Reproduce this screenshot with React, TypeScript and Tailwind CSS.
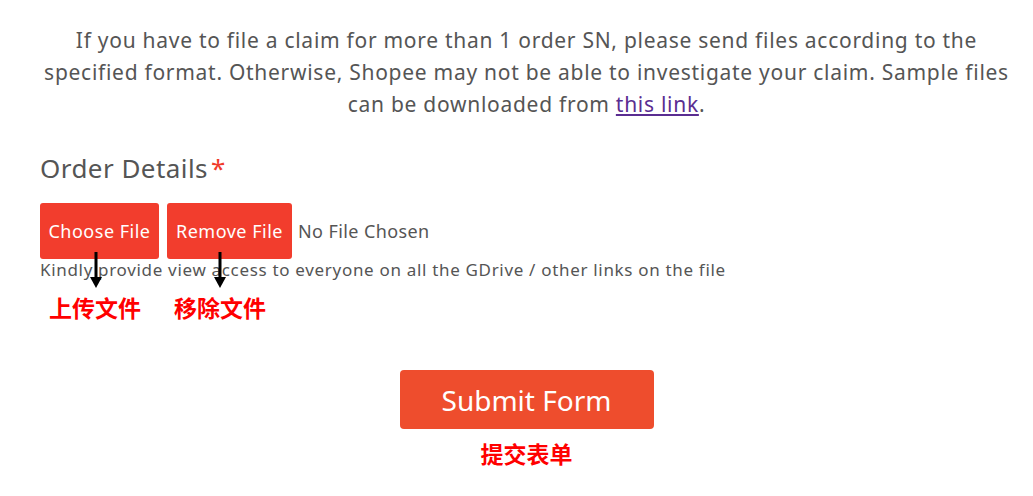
import React from "react";

function Arrow({ x }: { x: number }) {
  return (
    <svg
      className="absolute"
      style={{ left: x - 7, top: 252 }}
      width="14"
      height="37"
      viewBox="0 0 14 37"
    >
      <rect x="5.5" y="0" width="3" height="27" fill="#000" />
      <polygon points="1,25 13,25 7,36" fill="#000" />
    </svg>
  );
}

export default function App() {
  const font = { fontFamily: '"Noto Sans", "Open Sans", sans-serif' };
  const cjk = { fontFamily: '"Noto Sans CJK SC", sans-serif' };
  return (
    <div className="relative w-[1033px] h-[496px] bg-white overflow-hidden" style={font}>
      <p className="pt-[24px] pl-[20px] text-center text-[21px] leading-[32px] tracking-[0.72px] text-[#555555]">
        If you have to file a claim for more than 1 order SN, please send files according to the
        <br />
        specified format. Otherwise, Shopee may not be able to investigate your claim. Sample files
        <br />
        can be downloaded from{" "}
        <span className="text-[#5a2d91] underline">this link</span>.
      </p>

      <div className="pl-[40px] mt-[30px]">
        <div className="text-[26px] leading-[36px] tracking-[0.45px] text-[#555555]">
          Order Details<span className="text-[#f03a2a] ml-[3px]">*</span>
        </div>
        <div className="mt-[17px] flex items-center gap-[8px]">
          <button className="h-[56px] w-[119px] rounded-[3px] bg-[#f23d2d] text-white text-[18px] tracking-[0.5px]">
            Choose File
          </button>
          <button className="h-[56px] w-[125px] rounded-[3px] bg-[#f23d2d] text-white text-[18px] tracking-[0.5px]">
            Remove File
          </button>
          <span className="text-[18px] text-[#555555] tracking-[0.4px] -ml-[2px]">No File Chosen</span>
        </div>
        <div className="text-[17px] leading-[22px] tracking-[0.68px] text-[#555555]">
          Kindly provide view access to everyone on all the GDrive / other links on the file
        </div>
        <div className="mt-[11px] flex text-[23px] leading-[30px] font-bold text-[#ff0000]" style={cjk}>
          <span className="ml-[9px]">上传文件</span>
          <span className="ml-[33px]">移除文件</span>
        </div>
      </div>

      <div className="mt-[48px] flex flex-col items-center">
        <button className="h-[59px] w-[254px] rounded-[4px] bg-[#ee4d2d] text-white text-[28px] ml-[20px]">
          Submit Form
        </button>
        <div className="mt-[10px] ml-[20px] text-[23px] leading-[28px] font-bold text-[#ff0000]" style={cjk}>
          提交表单
        </div>
      </div>

      <Arrow x={96} />
      <Arrow x={220} />
    </div>
  );
}
